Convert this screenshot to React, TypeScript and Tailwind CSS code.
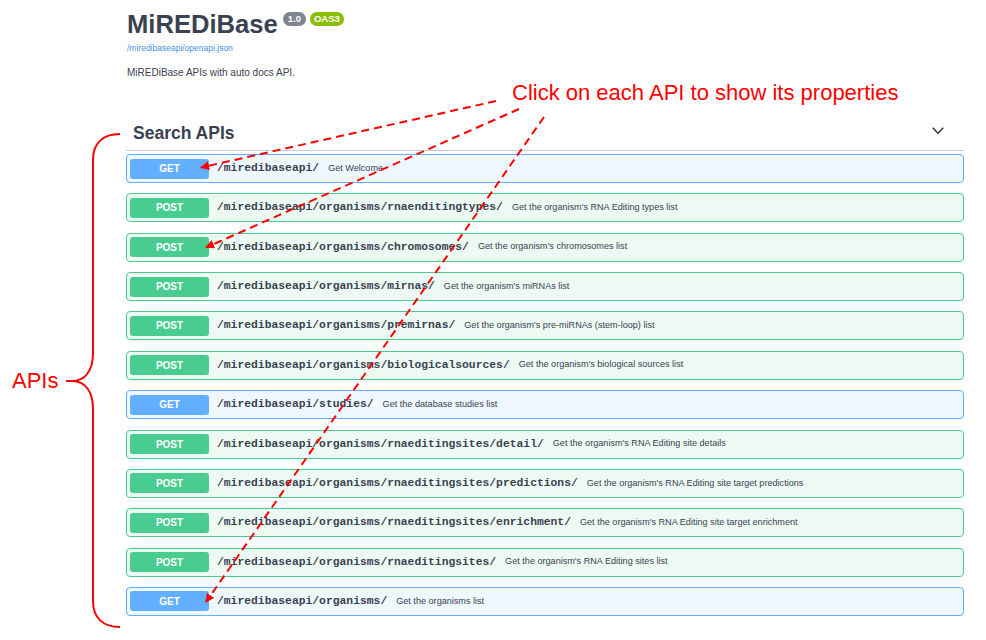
import React from "react";

type Op = { method: "GET" | "POST"; path: string; desc: string };

const ops: Op[] = [
  { method: "GET", path: "/miredibaseapi/", desc: "Get Welcome" },
  { method: "POST", path: "/miredibaseapi/organisms/rnaenditingtypes/", desc: "Get the organism's RNA Editing types list" },
  { method: "POST", path: "/miredibaseapi/organisms/chromosomes/", desc: "Get the organism's chromosomes list" },
  { method: "POST", path: "/miredibaseapi/organisms/mirnas/", desc: "Get the organism's miRNAs list" },
  { method: "POST", path: "/miredibaseapi/organisms/premirnas/", desc: "Get the organism's pre-miRNAs (stem-loop) list" },
  { method: "POST", path: "/miredibaseapi/organisms/biologicalsources/", desc: "Get the organism's biological sources list" },
  { method: "GET", path: "/miredibaseapi/studies/", desc: "Get the database studies list" },
  { method: "POST", path: "/miredibaseapi/organisms/rnaeditingsites/detail/", desc: "Get the organism's RNA Editing site details" },
  { method: "POST", path: "/miredibaseapi/organisms/rnaeditingsites/predictions/", desc: "Get the organism's RNA Editing site target predictions" },
  { method: "POST", path: "/miredibaseapi/organisms/rnaeditingsites/enrichment/", desc: "Get the organism's RNA Editing site target enrichment" },
  { method: "POST", path: "/miredibaseapi/organisms/rnaeditingsites/", desc: "Get the organism's RNA Editing sites list" },
  { method: "GET", path: "/miredibaseapi/organisms/", desc: "Get the organisms list" },
];

function Row({ op }: { op: Op }) {
  const isGet = op.method === "GET";
  return (
    <div
      className={
        isGet
          ? "flex h-[29px] items-center rounded-[4px] border border-[#61affe] bg-[#eff7ff] px-[3px]"
          : "flex h-[29px] items-center rounded-[4px] border border-[#49cc90] bg-[#edfaf4] px-[3px]"
      }
    >
      <div
        className={
          isGet
            ? "flex h-[20px] w-[79px] items-center justify-center rounded-[3px] bg-[#61affe] text-[10px] font-bold text-white"
            : "flex h-[20px] w-[79px] items-center justify-center rounded-[3px] bg-[#49cc90] text-[10px] font-bold text-white"
        }
      >
        {op.method}
      </div>
      <span className="ml-[8px] font-['Liberation_Mono',monospace] text-[11.35px] font-bold text-[#3b4151]">
        {op.path}
      </span>
      <span className="ml-[9px] text-[9.1px] text-[#3b4151]">{op.desc}</span>
    </div>
  );
}

export default function App() {
  return (
    <div className="relative h-[640px] w-[986px] overflow-hidden bg-white font-['Liberation_Sans',Arial,sans-serif]">
      <div className="flex flex-col pl-[126px] pr-[22px]">
        <div className="ml-[1px] mt-[11px] flex h-[26px] items-start">
          <span className="text-[25.6px] font-bold leading-[26px] text-[#3b4151]">MiREDiBase</span>
          <span className="ml-[5px] mt-[1px] flex h-[14px] items-center rounded-full bg-[#7d8492] px-[5px] text-[9.5px] font-bold text-white">
            1.0
          </span>
          <span className="ml-[4px] mt-[1px] flex h-[14px] items-center rounded-full bg-[#89bf04] px-[4px] text-[9.5px] font-bold text-white">
            OAS3
          </span>
        </div>
        <div className="ml-[1px] mt-[6px] h-[10px] text-[8.5px] leading-[10px] text-[#4990e2]">
          /miredibaseapi/openapi.json
        </div>
        <div className="ml-[1px] mt-[13.5px] h-[12px] text-[10px] leading-[12px] text-[#3b4151]">
          MiREDiBase APIs with auto docs API.
        </div>

        <div className="mt-[44.5px] flex items-center justify-between border-b border-[#c9cbd0] pb-[7px]">
          <span className="ml-[7px] text-[17.5px] font-bold leading-[20px] text-[#3b4151]">Search APIs</span>
          <svg className="mb-[4px] mr-[20px]" width="12" height="8" viewBox="0 0 12 8">
            <path d="M0.7 0.8 L6 6.3 L11.3 0.8" fill="none" stroke="#2b2f38" strokeWidth="1.3" />
          </svg>
        </div>

        <div className="mt-[3px] flex flex-col gap-[10.36px]">
          {ops.map((op, i) => (
            <Row key={i} op={op} />
          ))}
        </div>
      </div>

      <div className="pointer-events-none absolute left-[512px] top-[81.5px] whitespace-nowrap text-[22px] leading-[22px] text-[#ff0000]">
        Click on each API to show its properties
      </div>
      <div className="pointer-events-none absolute left-[12px] top-[369.5px] text-[22px] leading-[22px] text-[#ff0000]">
        APIs
      </div>

      <svg className="pointer-events-none absolute left-0 top-0" width="986" height="640" viewBox="0 0 986 640">
        <defs>
          <marker id="ah" viewBox="0 0 10 10" refX="9" refY="5" markerWidth="4.5" markerHeight="4.5" orient="auto" markerUnits="strokeWidth">
            <path d="M0,0 L10,5 L0,10 z" fill="#ff0000" />
          </marker>
        </defs>
        <path
          d="M120,134 C103,134 93,143 93,160 L93,353 C93,371 85,381 72,381 L66,381 M72,381 C85,381 93,391 93,409 L93,601 C93,618 103,627 120,627"
          fill="none"
          stroke="#ff0000"
          strokeWidth="2"
        />
        <line x1="496" y1="101" x2="201" y2="167.5" stroke="#ff0000" strokeWidth="2" strokeDasharray="8 5" markerEnd="url(#ah)" />
        <line x1="519" y1="109" x2="206" y2="247.5" stroke="#ff0000" strokeWidth="2" strokeDasharray="8 5" markerEnd="url(#ah)" />
        <line x1="544" y1="117" x2="206" y2="602" stroke="#ff0000" strokeWidth="2" strokeDasharray="8 5" markerEnd="url(#ah)" />
      </svg>
    </div>
  );
}
